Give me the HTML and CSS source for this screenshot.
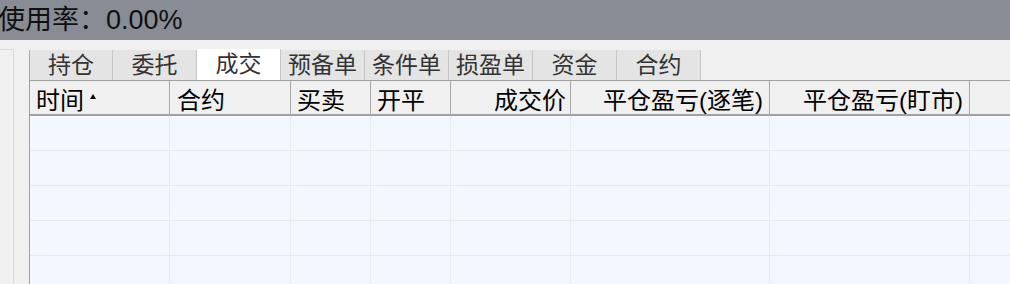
FILE: index.html
```html
<!DOCTYPE html>
<html lang="zh-CN">
<head>
    <meta charset="UTF-8">
    <title>成交</title>
    <link rel="stylesheet" href="styles.css">
</head>
<body>
    <div class="topbar">
        <span class="usage">使用率：0.00%</span>
    </div>
    <div class="main">
        <div class="side"></div>
        <div class="panel">
            <ul class="tabs">
                <li>持仓</li>
                <li>委托</li>
                <li class="current">成交</li>
                <li>预备单</li>
                <li>条件单</li>
                <li>损盈单</li>
                <li>资金</li>
                <li>合约</li>
            </ul>
            <div class="grid">
                <div class="row head">
                    <div class="cell">时间<span class="sort"></span></div>
                    <div class="cell">合约</div>
                    <div class="cell">买卖</div>
                    <div class="cell">开平</div>
                    <div class="cell num">成交价</div>
                    <div class="cell num">平仓盈亏(逐笔)</div>
                    <div class="cell num">平仓盈亏(盯市)</div>
                    <div class="cell last"></div>
                </div>
                <div class="row"><div class="cell"></div><div class="cell"></div><div class="cell"></div><div class="cell"></div><div class="cell"></div><div class="cell"></div><div class="cell"></div><div class="cell last"></div></div>
                <div class="row"><div class="cell"></div><div class="cell"></div><div class="cell"></div><div class="cell"></div><div class="cell"></div><div class="cell"></div><div class="cell"></div><div class="cell last"></div></div>
                <div class="row"><div class="cell"></div><div class="cell"></div><div class="cell"></div><div class="cell"></div><div class="cell"></div><div class="cell"></div><div class="cell"></div><div class="cell last"></div></div>
                <div class="row"><div class="cell"></div><div class="cell"></div><div class="cell"></div><div class="cell"></div><div class="cell"></div><div class="cell"></div><div class="cell"></div><div class="cell last"></div></div>
                <div class="row"><div class="cell"></div><div class="cell"></div><div class="cell"></div><div class="cell"></div><div class="cell"></div><div class="cell"></div><div class="cell"></div><div class="cell last"></div></div>
            </div>
        </div>
    </div>
</body>
</html>
```

FILE: styles.css
```css
* {
    padding: 0;
    margin: 0;
    list-style: none;
    box-sizing: border-box;
}
body {
    width: 1010px;
    height: 284px;
    overflow: hidden;
    background-color: #f0f0f0;
    font-family: "Liberation Sans", "Noto Sans CJK SC", sans-serif;
}
.topbar {
    height: 40px;
    background-color: #888c94;
    display: flex;
    align-items: center;
}
.usage {
    margin-left: -2px;
    margin-top: -5px;
    font-size: 27px;
    color: #111;
}
.main {
    display: flex;
    height: 244px;
}
.side {
    width: 14px;
    margin-top: 9px;
    border-top: 1px solid #dadada;
    border-right: 1px solid #dadada;
}
.panel {
    flex: 1;
    margin-left: 15px;
    padding-top: 10px;
    overflow: hidden;
}
.tabs {
    display: flex;
    height: 30px;
}
.tabs li {
    width: 84px;
    height: 30px;
    line-height: 30px;
    text-align: center;
    font-size: 23px;
    color: #333;
    background-color: #e4e4e4;
    border-right: 1px solid #c6c6c6;
}
.tabs li:first-child {
    border-left: 1px solid #a8a8a8;
}
.tabs li.current {
    background-color: #fff;
    margin-top: -1px;
    height: 31px;
}
.grid {
    border-top: 1px solid #a0a0a0;
    border-left: 1px solid #a0a0a0;
    width: 1200px;
}
.row {
    display: grid;
    grid-template-columns: 140px 121px 80px 80px 120px 199px 200px 1fr;
    height: 35px;
    background-color: #f3f7fe;
    border-bottom: 1px solid #e6e9ee;
}
.row .cell {
    border-right: 1px solid #e8eaee;
}
.row.head {
    height: 35px;
    background-color: #f0f0f0;
    border-bottom: 2px solid #a0a0a0;
}
.head .cell {
    display: flex;
    align-items: center;
    padding: 0 6px;
    font-size: 24px;
    color: #000;
    white-space: nowrap;
    border-right: 1px solid #a8a8a8;
}
.head .cell.num {
    justify-content: flex-end;
}
.head .cell:nth-child(2) {
    padding-left: 7px;
}
.head .cell:nth-child(5) {
    padding-right: 4px;
}
.sort {
    width: 0;
    height: 0;
    margin-left: 6px;
    margin-top: -4px;
    border-left: 3px solid transparent;
    border-right: 3px solid transparent;
    border-bottom: 5px solid #000;
}
.row .cell.last {
    border-right: none;
}
```
